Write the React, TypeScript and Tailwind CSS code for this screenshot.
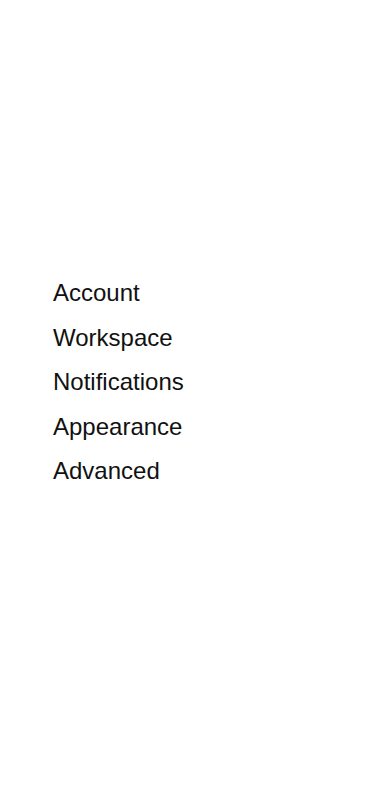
export default function App() {
  const items = ["Account", "Workspace", "Notifications", "Appearance", "Advanced"];
  return (
    <div className="min-h-[800px] w-full bg-white pt-[277px] pl-[53px] font-['Liberation_Sans',Arial,sans-serif]">
      <ul className="flex flex-col gap-[12.5px]">
        {items.map((it) => (
          <li key={it} className="text-2xl leading-8 text-[#111]">
            {it}
          </li>
        ))}
      </ul>
    </div>
  );
}
